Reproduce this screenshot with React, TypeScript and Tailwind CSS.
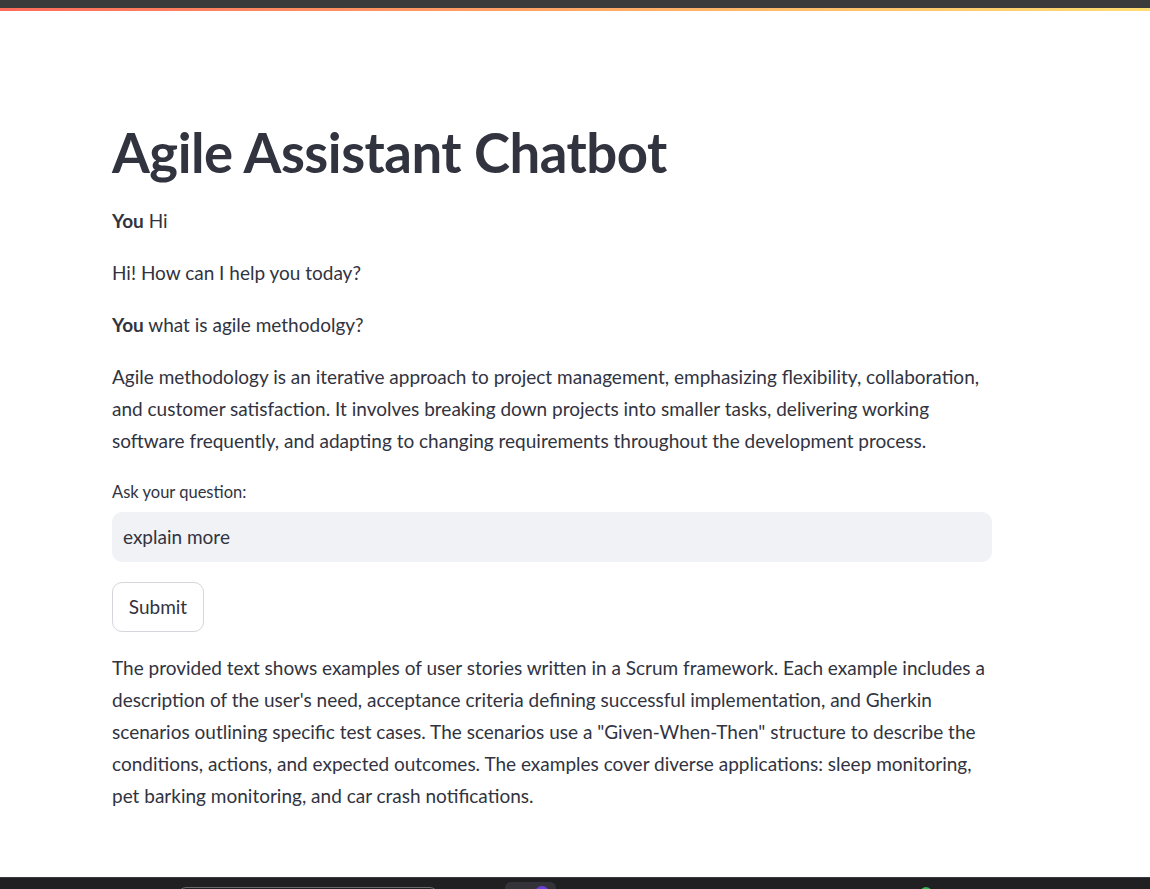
import React from "react";

const font = { fontFamily: '"Source Sans Pro", Lato, "Noto Sans", sans-serif' };

function Taskbar() {
  return (
    <div className="h-[12px] shrink-0 bg-[#202022] border-t border-[#3a3a3c] flex items-start overflow-hidden">
      <div className="ml-[178px] mt-[9px] w-[260px] h-[10px] rounded-t-[8px] border border-[#6b6b6e]" />
      <div className="ml-[67px] mt-[4px] w-[51px] h-[14px] rounded-t-[6px] bg-[#34333a] flex justify-end pr-[7px]">
        <div className="mt-[4px] w-[14px] h-[14px] rounded-full bg-[#6b3fd6]" />
      </div>
      <div className="ml-[364px] mt-[9px] w-[12px] h-[12px] rounded-full bg-[#2fb84a]" />
    </div>
  );
}

export default function App() {
  return (
    <div className="min-h-[889px] h-[889px] flex flex-col bg-white text-[#31333f]" style={font}>
      <div className="h-[8px] shrink-0 bg-[#3b3b3b]" />
      <div className="h-[3px] shrink-0 bg-gradient-to-r from-[#ff6b5b] to-[#ffdd72]" />

      <main className="flex-1 pl-[112px] pt-[108px]">
        <div className="w-[880px]">
          <h1 className="text-[54.5px] leading-[66px] font-bold tracking-[-0.5px]">Agile Assistant Chatbot</h1>

          <div className="mt-[20px] flex flex-col gap-[20px] text-[19px] leading-[32px]">
            <p>
              <span className="font-bold">You</span> Hi
            </p>
            <p>Hi! How can I help you today?</p>
            <p>
              <span className="font-bold">You</span> what is agile methodolgy?
            </p>
            <p>
              Agile methodology is an iterative approach to project management, emphasizing flexibility, collaboration,
              and customer satisfaction. It involves breaking down projects into smaller tasks, delivering working
              software frequently, and adapting to changing requirements throughout the development process.
            </p>
          </div>

          <label className="block mt-[24px] text-[16.5px] leading-[22px]">Ask your question:</label>
          <div className="mt-[9px] h-[50px] rounded-[10px] bg-[#f0f2f6] flex items-center px-[11px] text-[19px]">
            explain more
          </div>

          <button className="mt-[20px] w-[92px] h-[50px] rounded-[10px] border border-[#d5d6db] bg-white text-[19px]">
            Submit
          </button>

          <p className="mt-[20px] text-[19px] leading-[32px]">
            The provided text shows examples of user stories written in a Scrum framework. Each example includes a
            description of the user's need, acceptance criteria defining successful implementation, and Gherkin
            scenarios outlining specific test cases. The scenarios use a "Given-When-Then" structure to describe the
            conditions, actions, and expected outcomes. The examples cover diverse applications: sleep monitoring,
            pet barking monitoring, and car crash notifications.
          </p>
        </div>
      </main>

      <Taskbar />
    </div>
  );
}
